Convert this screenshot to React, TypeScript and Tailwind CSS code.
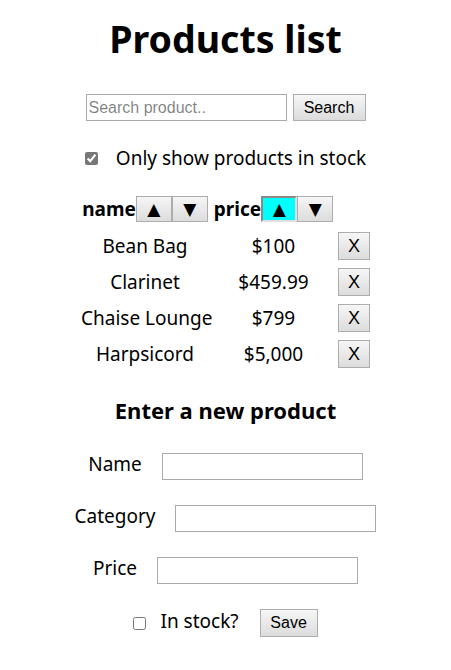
import React, { useState } from "react";

type Product = { name: string; price: string };

const products: Product[] = [
  { name: "Bean Bag", price: "$100" },
  { name: "Clarinet", price: "$459.99" },
  { name: "Chaise Lounge", price: "$799" },
  { name: "Harpsicord", price: "$5,000" },
];

const btn =
  "border border-[#adadad] bg-gradient-to-b from-[#f6f6f6] to-[#dcdcdc] font-['Liberation_Sans',Arial,sans-serif] text-[16px] text-black leading-none";

const input =
  "w-[201px] h-[27px] border border-[#a9a9a9] bg-white px-[2px] font-['Liberation_Sans',Arial,sans-serif] text-[16px] outline-none";

function SortButtons({ active }: { active?: boolean }) {
  return (
    <span className="flex">
      <button
        className={`w-[36px] h-[26px] text-[17px] leading-none font-['DejaVu_Sans',sans-serif] ${
          active
            ? "bg-[#00ffff] border-2 border-t-[#8a8a8a] border-l-[#8a8a8a] border-b-[#e0e0e0] border-r-[#e0e0e0]"
            : "border border-[#adadad] bg-gradient-to-b from-[#f6f6f6] to-[#dcdcdc]"
        }`}
      >
        ▲
      </button>
      <button className="w-[36px] h-[26px] text-[17px] leading-none font-['DejaVu_Sans',sans-serif] border border-[#adadad] bg-gradient-to-b from-[#f6f6f6] to-[#dcdcdc]">
        ▼
      </button>
    </span>
  );
}

export default function App() {
  const [inStock, setInStock] = useState(true);

  return (
    <div className="w-[451px] min-h-[670px] bg-white text-black font-['Noto_Sans',sans-serif] text-[19px] whitespace-nowrap flex flex-col items-center">
      <h1 className="mt-[14px] text-[37.5px] font-bold leading-[50px]">Products list</h1>

      {/* search */}
      <div className="mt-[30px] flex items-center gap-[6px]">
        <input className={input} placeholder="Search product.." />
        <button className={`${btn} w-[73px] h-[27px]`}>Search</button>
      </div>

      <label className="mt-[22px] flex items-center gap-[18px] leading-[30px]">
        <input
          type="checkbox"
          checked={inStock}
          onChange={(e) => setInStock(e.target.checked)}
          className="w-[13px] h-[13px] accent-[#777]"
        />
        Only show products in stock
      </label>

      {/* product table */}
      <div className="mt-[23px] grid grid-cols-[128px_123px_32px] gap-x-[3px] gap-y-[8px] items-center text-center">
        <div className="flex items-center justify-center h-[26px] mb-[2px] font-bold">
          name
          <SortButtons />
        </div>
        <div className="flex items-center justify-center h-[26px] mb-[2px] font-bold">
          price
          <SortButtons active />
        </div>
        <div />
        {products.map((p) => (
          <React.Fragment key={p.name}>
            <div className="leading-[28px]">{p.name}</div>
            <div className="leading-[28px]">{p.price}</div>
            <button className={`${btn} w-[32px] h-[28px] text-[18px]`}>X</button>
          </React.Fragment>
        ))}
      </div>

      {/* new product */}
      <h3 className="mt-[27px] text-[22px] font-bold leading-[30px]">Enter a new product</h3>

      <div className="mt-[28px] flex flex-col items-center gap-[25px]">
        <div className="flex items-center gap-[20px]">
          <span className="leading-[27px] -mt-[4px]">Name</span>
          <input className={input} />
        </div>
        <div className="flex items-center gap-[20px]">
          <span className="leading-[27px] -mt-[4px]">Category</span>
          <input className={input} />
        </div>
        <div className="flex items-center gap-[20px]">
          <span className="leading-[27px] -mt-[4px]">Price</span>
          <input className={input} />
        </div>
        <div className="flex items-center">
          <input type="checkbox" className="w-[13px] h-[13px] accent-[#777]" />
          <span className="ml-[14px] leading-[27px] -mt-[4px]">In stock?</span>
          <button className={`${btn} ml-[21px] w-[58px] h-[28px]`}>Save</button>
        </div>
      </div>
    </div>
  );
}
